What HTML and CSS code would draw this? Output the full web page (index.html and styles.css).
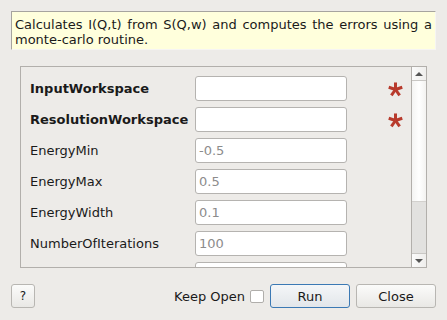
FILE: index.html
```html
<!DOCTYPE html>
<html lang="en">
<head>
<meta charset="UTF-8">
<title>CalculateIqt</title>
<link rel="stylesheet" href="styles.css">
</head>
<body>

<div class="dialog">
  <div class="description">Calculates I(Q,t) from S(Q,w) and computes the errors using a monte-carlo routine.</div>

  <div class="scroll-area">
    <div class="properties">
      <label class="prop-name required">InputWorkspace</label>
      <input type="text" class="prop-input">
      <span class="star"><svg width="15" height="15" viewBox="0 0 16 16"><g stroke="#b83a2c" stroke-width="3.2"><line x1="8" y1="8" x2="8" y2="0.5"/><line x1="8" y1="8" x2="15.2" y2="5.6"/><line x1="8" y1="8" x2="12.4" y2="14.2"/><line x1="8" y1="8" x2="3.6" y2="14.2"/><line x1="8" y1="8" x2="0.8" y2="5.6"/></g></svg></span>

      <label class="prop-name required">ResolutionWorkspace</label>
      <input type="text" class="prop-input">
      <span class="star"><svg width="15" height="15" viewBox="0 0 16 16"><g stroke="#b83a2c" stroke-width="3.2"><line x1="8" y1="8" x2="8" y2="0.5"/><line x1="8" y1="8" x2="15.2" y2="5.6"/><line x1="8" y1="8" x2="12.4" y2="14.2"/><line x1="8" y1="8" x2="3.6" y2="14.2"/><line x1="8" y1="8" x2="0.8" y2="5.6"/></g></svg></span>

      <label class="prop-name">EnergyMin</label>
      <input type="text" class="prop-input" placeholder="-0.5">
      <span class="star"></span>

      <label class="prop-name">EnergyMax</label>
      <input type="text" class="prop-input" placeholder="0.5">
      <span class="star"></span>

      <label class="prop-name">EnergyWidth</label>
      <input type="text" class="prop-input" placeholder="0.1">
      <span class="star"></span>

      <label class="prop-name">NumberOfIterations</label>
      <input type="text" class="prop-input" placeholder="100">
      <span class="star"></span>

      <label class="prop-name"></label>
      <input type="text" class="prop-input">
      <span class="star"></span>
    </div>

    <div class="scrollbar">
      <div class="arrow up"><span></span></div>
      <div class="thumb"></div>
      <div class="track"></div>
      <div class="arrow down"><span></span></div>
    </div>
  </div>

  <div class="footer">
    <button class="btn help">?</button>
    <div class="spacer"></div>
    <label class="keep-open">Keep Open <span class="checkbox"></span></label>
    <button class="btn run">Run</button>
    <button class="btn close">Close</button>
  </div>
</div>

</body>
</html>
```

FILE: styles.css
```css
body {
  margin: 0;
  background-color: #edebe8;
  font-family: "DejaVu Sans", sans-serif;
  font-size: 13px;
  color: #1a1a1a;
}

.dialog {
  width: 447px;
  height: 320px;
  display: flex;
  flex-direction: column;
}

.description {
  margin: 11px 11px 0 11px;
  height: 39px;
  box-sizing: border-box;
  padding: 5px 3px 0 3px;
  background: #ffffdc;
  border-top: 1px solid #a6a49f;
  border-left: 1px solid #a6a49f;
  border-right: 1px solid #f6f5f3;
  border-bottom: 1px solid #f6f5f3;
  line-height: 15px;
  text-align: justify;
}

.scroll-area {
  margin: 16px 0 0 20px;
  width: 407px;
  height: 202px;
  box-sizing: border-box;
  border: 1px solid #b2afab;
  display: flex;
  overflow: hidden;
}

.properties {
  flex: 1;
  display: grid;
  grid-template-columns: 165px 152px 1fr;
  grid-auto-rows: 25px;
  row-gap: 6px;
  padding: 9px 0 0 9px;
  align-items: center;
  align-content: start;
}

.prop-name {
  white-space: nowrap;
}

.prop-name.required {
  font-weight: bold;
}

.prop-input {
  width: 152px;
  height: 25px;
  box-sizing: border-box;
  border: 1px solid #b5b3b0;
  border-radius: 3px;
  background: #fff;
  font-family: "DejaVu Sans", sans-serif;
  font-size: 13px;
  padding: 0 3px;
  margin: 0;
  outline: none;
}

.prop-input::placeholder {
  color: #8c8c8c;
}

.star {
  display: flex;
  padding-left: 41px;
  padding-top: 1px;
}

.scrollbar {
  width: 14px;
  border-left: 1px solid #b2afab;
  display: flex;
  flex-direction: column;
  background: #e2e1df;
}

.arrow {
  height: 13px;
  background: linear-gradient(to right, #fbfbfb, #efeeec);
  display: flex;
  align-items: center;
  justify-content: center;
}

.arrow.up {
  border-bottom: 1px solid #c9c7c4;
}

.arrow.down {
  border-top: 1px solid #c9c7c4;
}

.arrow span {
  width: 0;
  height: 0;
  border-left: 4px solid transparent;
  border-right: 4px solid transparent;
}

.arrow.up span {
  border-bottom: 4px solid #555;
}

.arrow.down span {
  border-top: 4px solid #555;
}

.thumb {
  height: 120px;
  background: linear-gradient(to right, #f4f4f3, #ffffff 50%, #f3f2f0);
  border-bottom: 1px solid #d2d0cd;
}

.track {
  flex: 1;
  background: #e2e1df;
}

.footer {
  display: flex;
  align-items: center;
  margin: 16px 11px 0 11px;
  height: 24px;
}

.spacer {
  flex: 1;
}

.btn {
  height: 24px;
  box-sizing: border-box;
  border: 1px solid #b8b6b2;
  border-radius: 3px;
  background: linear-gradient(#fbfbfa, #e9e8e5);
  font-family: "DejaVu Sans", sans-serif;
  font-size: 13px;
  color: #1a1a1a;
  padding: 0;
  cursor: pointer;
}

.btn.help {
  width: 24px;
  font-size: 12px;
}

.btn.run {
  width: 80px;
  border-color: #3b79b4;
  background: linear-gradient(#f4f6f8, #e2e6ea);
}

.btn.close {
  width: 80px;
  margin-left: 6px;
}

.keep-open {
  display: flex;
  align-items: center;
  gap: 5px;
  margin-right: 6px;
}

.checkbox {
  width: 14px;
  height: 13px;
  box-sizing: border-box;
  border: 1px solid #b0aeab;
  border-radius: 2px;
  background: #fff;
}
```
